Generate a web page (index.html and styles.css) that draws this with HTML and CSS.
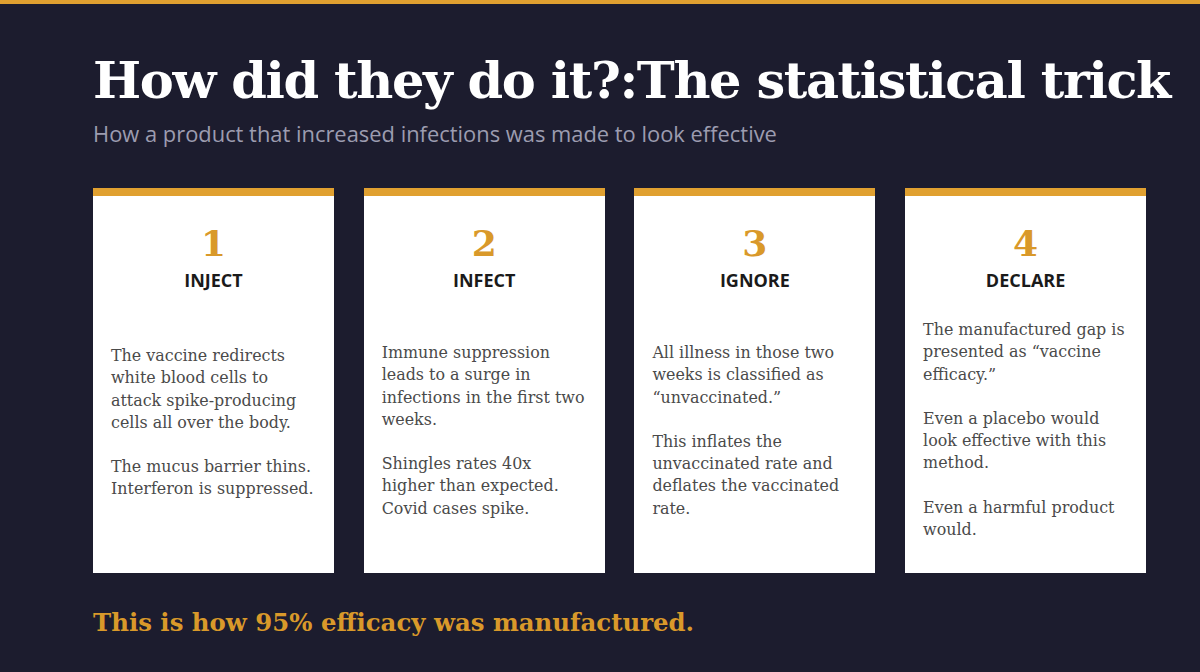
FILE: index.html
```html
<!DOCTYPE html>
<html>
<head>
<meta charset="utf-8">
<link rel="stylesheet" href="styles.css">
</head>
<body>
<div class="slide">
  <h1 class="title">How did they do it?:The statistical trick</h1>
  <p class="subtitle">How a product that increased infections was made to look effective</p>
  <div class="cards">
    <div class="card">
      <div class="num">1</div>
      <div class="head">INJECT</div>
      <div class="body body-low">
        <p>The vaccine redirects<br>white blood cells to<br>attack spike-producing<br>cells all over the body.</p>
        <p>The mucus barrier thins.<br>Interferon is suppressed.</p>
      </div>
    </div>
    <div class="card">
      <div class="num">2</div>
      <div class="head">INFECT</div>
      <div class="body">
        <p>Immune suppression<br>leads to a surge in<br>infections in the first two<br>weeks.</p>
        <p>Shingles rates 40x<br>higher than expected.<br>Covid cases spike.</p>
      </div>
    </div>
    <div class="card">
      <div class="num">3</div>
      <div class="head">IGNORE</div>
      <div class="body">
        <p>All illness in those two<br>weeks is classified as<br>“unvaccinated.”</p>
        <p>This inflates the<br>unvaccinated rate and<br>deflates the vaccinated<br>rate.</p>
      </div>
    </div>
    <div class="card">
      <div class="num">4</div>
      <div class="head">DECLARE</div>
      <div class="body body-tall">
        <p>The manufactured gap is<br>presented as “vaccine<br>efficacy.”</p>
        <p>Even a placebo would<br>look effective with this<br>method.</p>
        <p>Even a harmful product<br>would.</p>
      </div>
    </div>
  </div>
  <p class="footer">This is how 95% efficacy was manufactured.</p>
</div>
</body>
</html>
```

FILE: styles.css
```css
html, body {
  margin: 0;
  padding: 0;
}
body {
  background: #1c1c2e;
  border-top: 4px solid #e0a030;
  width: 1200px;
  height: 668px;
  overflow: hidden;
}
.slide {
  padding: 44px 0 0 93px;
}
.title {
  margin: 0;
  font-family: "DejaVu Serif", Georgia, serif;
  font-weight: bold;
  font-size: 51px;
  line-height: 64px;
  color: #ffffff;
  white-space: nowrap;
  letter-spacing: -1.4px;
}
.subtitle {
  margin: 8px 0 0 0;
  font-family: "Open Sans", sans-serif;
  font-size: 21.9px;
  line-height: 28px;
  color: #9c9cb0;
  white-space: nowrap;
}
.cards {
  display: flex;
  gap: 29.7px;
  margin-top: 40px;
}
.card {
  width: 241px;
  height: 377px;
  background: #ffffff;
  border-top: 8px solid #e0a030;
  display: flex;
  flex-direction: column;
}
.num {
  margin-top: 27px;
  text-align: center;
  font-family: "DejaVu Serif", Georgia, serif;
  font-weight: bold;
  font-size: 36px;
  line-height: 40px;
  color: #d9992a;
}
.head {
  margin-top: 4px;
  text-align: center;
  font-family: "Open Sans", sans-serif;
  font-weight: 700;
  font-size: 18px;
  line-height: 26px;
  color: #1a1a1a;
}
.body {
  padding: 49px 8px 0 18px;
}
.body-low {
  padding-top: 52px;
}
.body-tall {
  padding-top: 26px;
}
.body p {
  margin: 0 0 22px 0;
  font-family: "DejaVu Serif", Georgia, serif;
  font-size: 15.9px;
  line-height: 22.3px;
  color: #4a4a4a;
  white-space: nowrap;
}
.body p:last-child {
  margin-bottom: 0;
}
.footer {
  margin: 34px 0 0 0;
  font-family: "DejaVu Serif", Georgia, serif;
  font-weight: bold;
  font-size: 24.4px;
  line-height: 32px;
  color: #d9992a;
}
```
